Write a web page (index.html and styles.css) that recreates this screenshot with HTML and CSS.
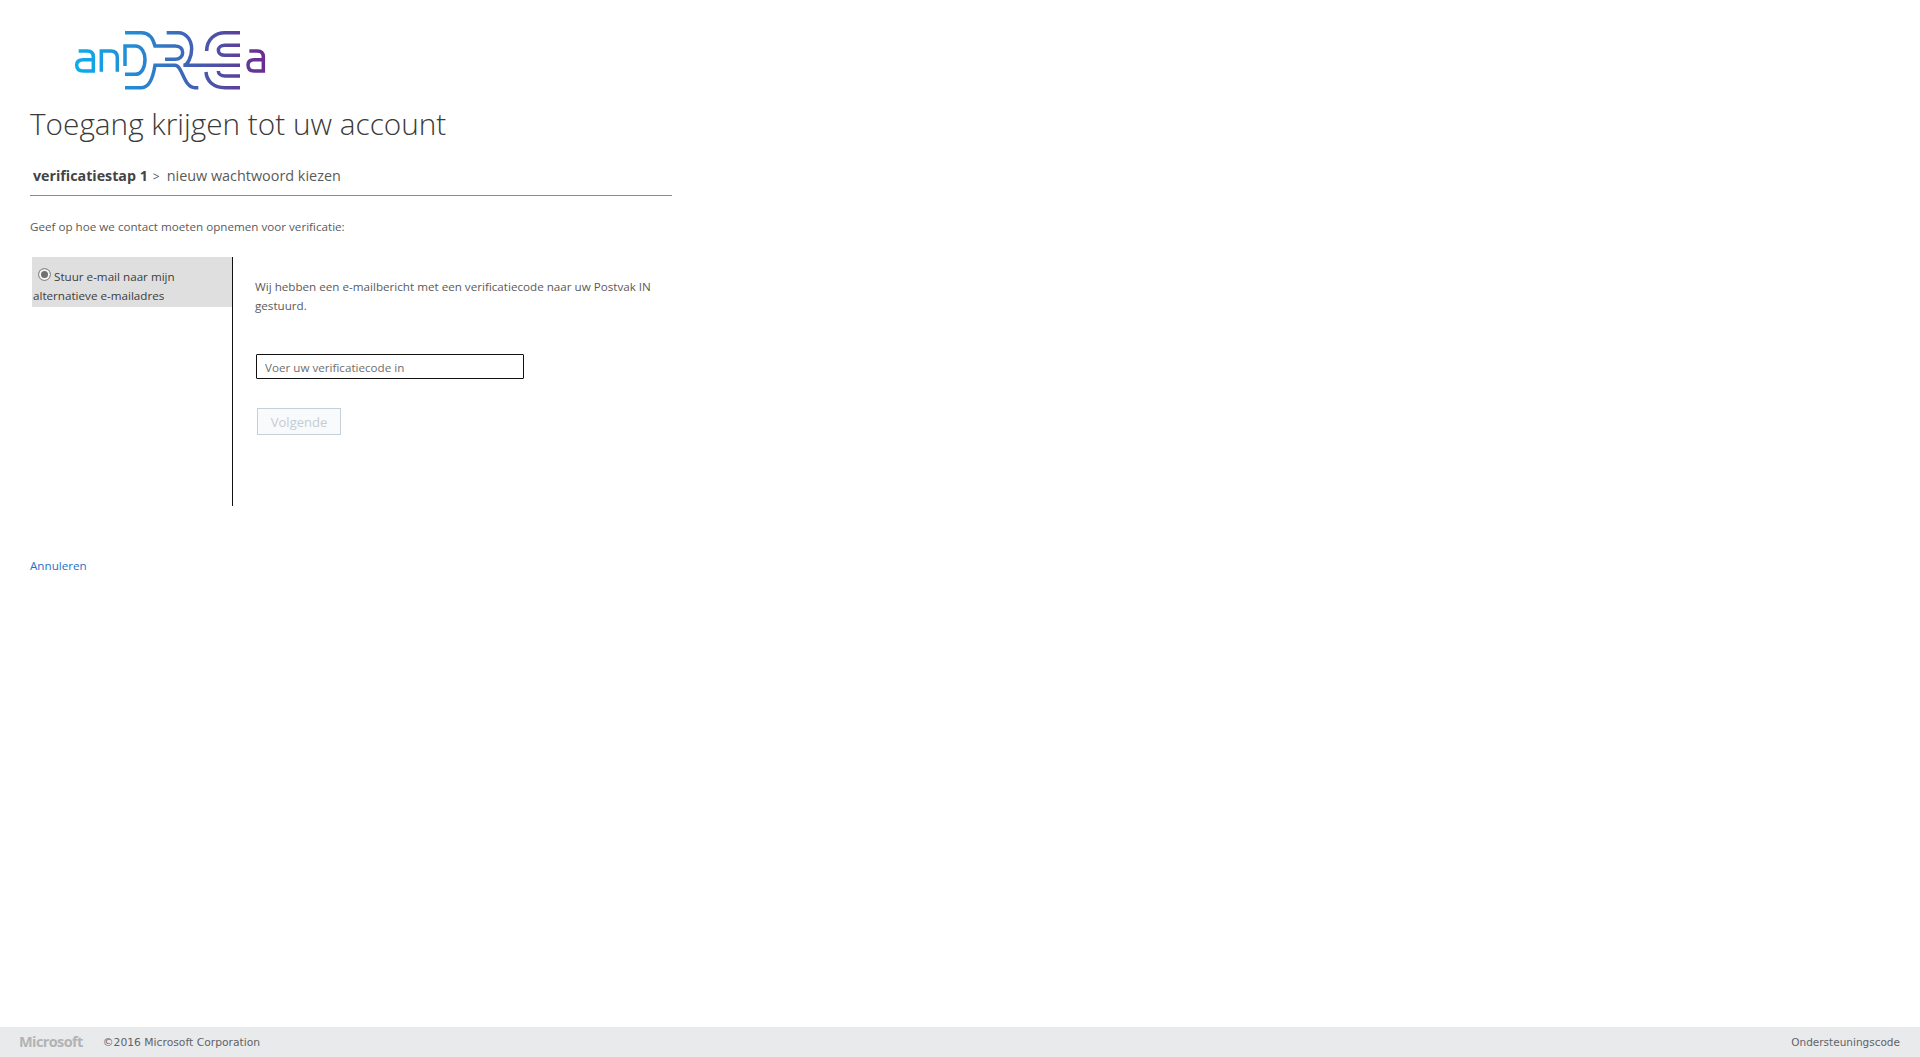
FILE: index.html
```html
<!DOCTYPE html>
<html lang="nl">
<head>
  <meta charset="UTF-8">
  <meta name="viewport" content="width=device-width, initial-scale=1">
  <title>Toegang krijgen tot uw account</title>
  <link rel="stylesheet" href="styles.css">
</head>
<body>

  <main>
    <div class="logo">
      <svg width="220" height="80" viewBox="0 0 660 240" fill="none" stroke-width="10.5" role="img" aria-label="andrea">
        <defs>
          <linearGradient id="logo-fill" gradientUnits="userSpaceOnUse" x1="45" y1="0" x2="615" y2="0">
            <stop offset="0" stop-color="#0aaeef"/>
            <stop offset="0.4" stop-color="#2d7fcb"/>
            <stop offset="0.7" stop-color="#4a56aa"/>
            <stop offset="1" stop-color="#6a2d8f"/>
          </linearGradient>
        </defs>
        <g stroke="url(#logo-fill)">
          <!-- a n -->
          <path d="M56 90H82Q100 90 100 108V150H70Q50 150 50 132Q50 116 70 116H100"/>
          <path d="M124 152V90H152Q172 90 172 110V152"/>
          <!-- D inner -->
          <path d="M195 135V75H225C245 75 255 95 255 115C255 140 245 160 225 160H195"/>
          <!-- D outer, runs on into the R -->
          <path d="M195 35H245C270 35 280 55 285 75H345C362 75 368 85 368 95C368 105 360 115 345 115H315"/>
          <path d="M195 200H245C270 200 280 165 285 133H345C368 133 370 200 405 200H415"/>
          <!-- R bowl, bar through to the E -->
          <path d="M320 35H355C380 35 395 60 395 83C395 108 383 133 370 133H540"/>
          <!-- E -->
          <path d="M540 35H495C465 35 440 55 440 90"/>
          <path d="M540 73H495C482 73 475 80 475 88C475 96 482 103 495 103H540"/>
          <path d="M540 165H495C482 165 475 158 475 150"/>
          <path d="M540 200H495C460 200 440 180 438 153"/>
          <!-- a -->
          <path d="M568 90H592Q610 90 610 108V150H582Q564 150 564 132Q564 116 582 116H610"/>
        </g>
      </svg>
    </div>

    <h1>Toegang krijgen tot uw account</h1>

    <div class="steps">
      <b>verificatiestap 1</b><span class="sep">&gt;</span>nieuw wachtwoord kiezen
    </div>

    <p class="intro">Geef op hoe we contact moeten opnemen voor verificatie:</p>

    <div class="verify">
      <div class="methods">
        <label class="method">
          <input type="radio" name="method" checked>Stuur e-mail naar mijn alternatieve e-mailadres
        </label>
      </div>
      <div class="detail">
        <p>Wij hebben een e-mailbericht met een verificatiecode naar uw Postvak IN gestuurd.</p>
        <input class="code" type="text" placeholder="Voer uw verificatiecode in">
        <button class="next" disabled>Volgende</button>
      </div>
    </div>

    <a class="cancel" href="#">Annuleren</a>
  </main>

  <footer>
    <span class="ms">Microsoft</span>
    <span class="copy">&copy;2016 Microsoft Corporation</span>
    <a class="support" href="#">Ondersteuningscode</a>
  </footer>

</body>
</html>
```

FILE: styles.css
```css
html, body {
  height: 100%;
}

body {
  margin: 0;
  display: flex;
  flex-direction: column;
  font-family: 'Open Sans', sans-serif;
  font-size: 11.65px;
  color: #5a5a5a;
  background: #fff;
}

main {
  flex: 1;
  padding: 21px 0 0 30px;
}

.logo {
  height: 79px;
  padding-left: 30px;
}

.logo svg {
  display: block;
}

h1 {
  margin: 3px 0 0;
  font-size: 29.75px;
  line-height: 42px;
  font-weight: 300;
  color: #3a3a3a;
}

.steps {
  width: 642px;
  margin-top: 21px;
  padding: 0 0 8px 3px;
  box-sizing: border-box;
  font-size: 14.4px;
  line-height: 20px;
  color: #5a5a5a;
  border-bottom: 1px solid #8e8e8e;
}

.steps b {
  font-size: 14.25px;
  color: #444;
}

.sep {
  margin: 0 7px 0 5px;
  font-size: 12px;
}

.intro {
  margin: 22px 0 0;
  line-height: 17px;
}

.verify {
  display: flex;
  width: 642px;
  height: 249px;
  margin: 22px 0 0 2px;
}

.methods {
  width: 200px;
  flex: none;
  border-right: 1px solid #111;
}

.method {
  display: block;
  height: 50px;
  padding-top: 10px;
  padding-left: 1px;
  box-sizing: border-box;
  line-height: 19px;
  color: #3c3c3c;
  background: #dfdfdf;
}

.method input {
  appearance: none;
  width: 13px;
  height: 13px;
  margin: 0 3px 0 5px;
  border: 1px solid #8e8e8e;
  border-radius: 50%;
  background: #707070;
  box-shadow: inset 0 0 0 2px #f4f4f4;
  vertical-align: 0;
}

.detail {
  flex: 1;
  padding: 20px 0 0 22px;
}

.detail p {
  margin: 0;
  width: 420px;
  line-height: 19px;
}

.code {
  display: block;
  width: 268px;
  height: 25px;
  margin: 39px 0 0 1px;
  padding: 1px 8px 0;
  box-sizing: border-box;
  font-family: inherit;
  font-size: 11.65px;
  border: 1px solid #111;
  border-radius: 1px;
}

.code::placeholder {
  color: #6e6e6e;
  opacity: 1;
}

.next {
  display: block;
  width: 84px;
  height: 27px;
  margin: 29px 0 0 2px;
  padding: 1px 0 0;
  font-family: inherit;
  font-size: 13px;
  color: #c4ccd4;
  background: #f8fafc;
  border: 1px solid #c6d0d9;
}

.cancel {
  display: block;
  width: max-content;
  margin-top: 51px;
  line-height: 17px;
  color: #2672c8;
  text-decoration: none;
}

footer {
  display: flex;
  align-items: center;
  height: 30px;
  padding: 0 20px 0 19px;
  font-family: 'DejaVu Sans', sans-serif;
  font-size: 10.5px;
  color: #5f6368;
  background: #e9eaec;
}

.ms {
  margin-top: -2px;
  font-family: 'Open Sans', sans-serif;
  font-size: 14.5px;
  font-weight: 700;
  letter-spacing: -0.6px;
  color: #b3b3b3;
}

.copy {
  margin-left: 20px;
  font-size: 10.75px;
}

.support {
  margin-left: auto;
  color: inherit;
  text-decoration: none;
}
```
